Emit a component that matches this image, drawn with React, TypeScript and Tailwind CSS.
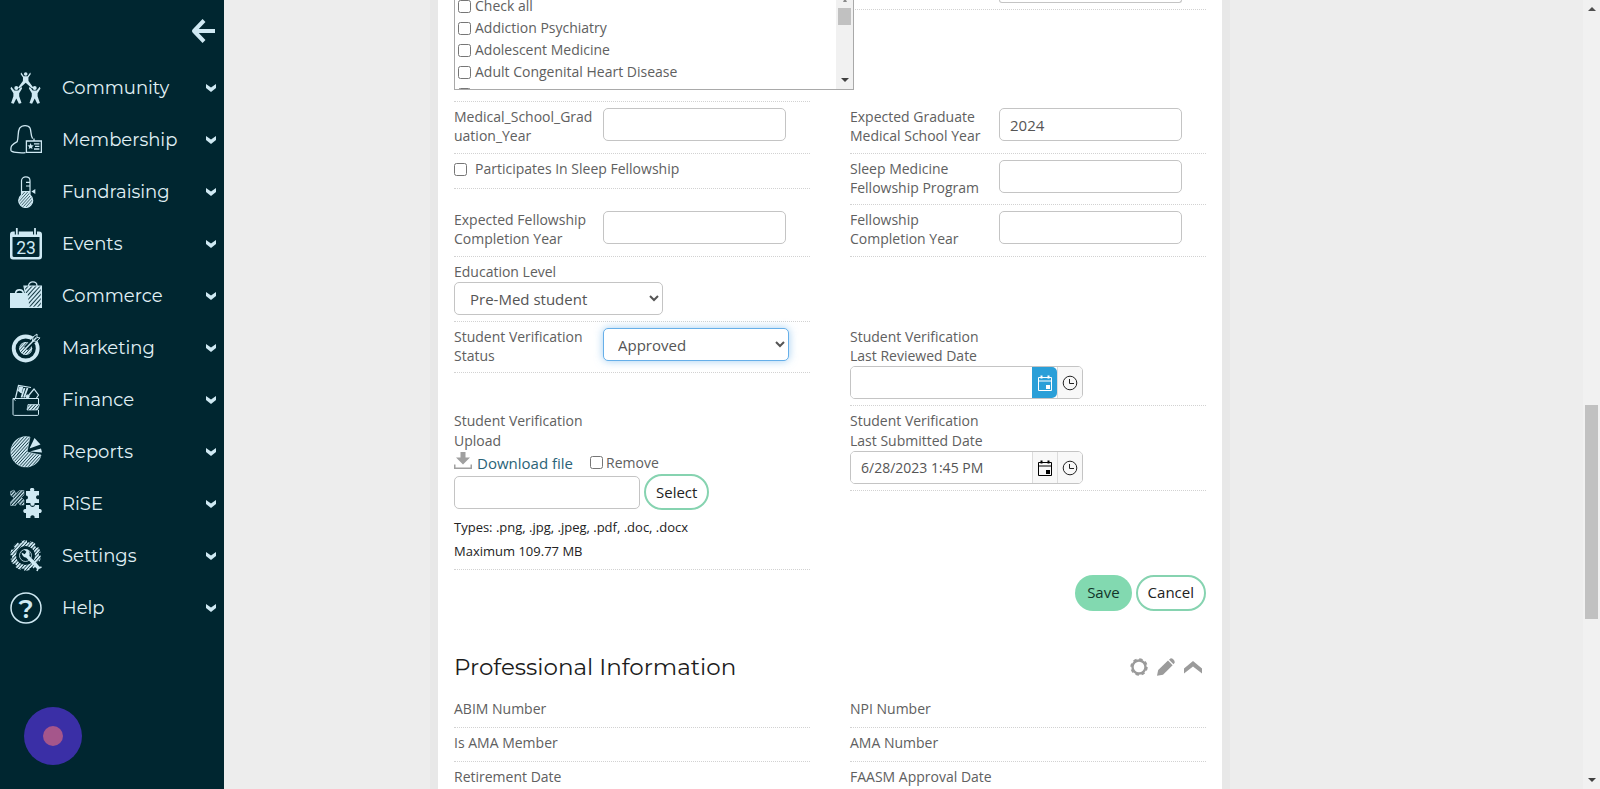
import React from "react";

type IconProps = { id: string };

function Hatch({ id, gap = 3 }: { id: string; gap?: number }) {
  return (
    <defs>
      <pattern id={id} width={gap} height={gap} patternUnits="userSpaceOnUse" patternTransform="rotate(42)">
        <rect width={gap / 2} height={gap} fill="currentColor" />
      </pattern>
    </defs>
  );
}

function Person({ x, y }: { x: number; y: number }) {
  return (
    <g transform={`translate(${x} ${y})`}>
      <circle cx="0" cy="1.6" r="2" fill="currentColor" />
      <path
        d="M-5 0.4L-5.8 2L-2.900 6.800L-2.900 9.800L-5.200 16.700L-2.600 17.400L0 12L2.600 17.400L5.200 16.700L2.900 9.800L2.900 6.800L5.800 2L5 0.400L2 4.200H-2Z"
        fill="currentColor"
      />
    </g>
  );
}

function CommunityIcon(_: IconProps) {
  return (
    <svg viewBox="0 0 32 32" className="size-8">
      <circle cx="15.7" cy="2" r="1.8" fill="currentColor" />
      <path
        d="M11.2 0.6L10.6 2L13 5.6L12.900 9L8 15.800L9.400 16.600L15.700 10.800L22 16.600L23.400 15.800L18.500 9L18.400 5.600L20.800 2L20.200 0.600L17.600 4.200H13.800Z"
        fill="currentColor"
      />
      <Person x={6.3} y={14.4} />
      <Person x={24.7} y={14.4} />
    </svg>
  );
}

function MembershipIcon(_: IconProps) {
  return (
    <svg viewBox="0 0 32 32" className="size-8" fill="none" stroke="currentColor" strokeWidth="1.3">
      <path d="M15.5 28.7C9 29.4 1.6 28 1 26.4C0.4 22.6 1.6 20.6 7.2 17.6C8.8 13 7.4 8 9.6 4.2C12 0.6 18.4 0.8 20 4C21.4 7 20.4 11 22.6 14.6" />
      <path d="M16.4 17H31.4V28.4H16.4Z" />
      <path d="M24 14.6V17M24 19.8H29.4M25 22.4H29.4M24 25H29.4" />
      <path d="M20.6 19l.9 2.2 2.2.2-1.700 1.500.5 2.200-1.900-1.200-1.900 1.200.5-2.200-1.700-1.500 2.200-.2z" fill="currentColor" stroke="none" />
    </svg>
  );
}

function FundraisingIcon({ id }: IconProps) {
  return (
    <svg viewBox="0 0 32 32" className="size-8" fill="none" stroke="currentColor" strokeWidth="1.2">
      <Hatch id={id} gap={2.2} />
      <path d="M11.500 15.500H20V19C21.800 20.400 22.700 22.200 22.700 24.500A7 7 0 0 1 8.700 24.500C8.700 22.200 9.800 20.400 11.500 19Z" fill={`url(#${id})`} stroke="none" />
      <path d="M11.500 4.700C11.500 -0.300 20 -0.300 20 4.700V19C21.800 20.400 22.700 22.200 22.700 24.500A7 7 0 0 1 8.700 24.500C8.700 22.200 9.800 20.400 11.500 19Z" />
      <path d="M16 6.300H20M16 10H20M11.500 15.500H20" />
      <path d="M21.400 15.400L25.300 13V18Z" fill="currentColor" stroke="none" />
    </svg>
  );
}

function EventsIcon(_: IconProps) {
  return (
    <svg viewBox="0 0 32 32" className="size-8">
      <path
        fillRule="evenodd"
        fill="currentColor"
        d="M3 3.500H29A3 3 0 0 1 32 6.500V28.500A3 3 0 0 1 29 31.500H3A3 3 0 0 1 0 28.500V6.500A3 3 0 0 1 3 3.500ZM2.500 9V27.500A1.600 1.600 0 0 0 4.100 29.100H27.900A1.600 1.600 0 0 0 29.500 27.500V9Z"
      />
      <path d="M6.800 0.500V6.500M25 0.500V6.500" stroke="#002630" strokeWidth="4" />
      <path d="M6.800 0.500V6.800M25 0.500V6.800" stroke="currentColor" strokeWidth="1.800" strokeLinecap="round" />
      <text x="16" y="25.500" textAnchor="middle" fontSize="17.500" fontFamily="Roboto, sans-serif" fontWeight="400" fill="currentColor">
        23
      </text>
    </svg>
  );
}

function CommerceIcon({ id }: IconProps) {
  return (
    <svg viewBox="0 0 32 32" className="size-8" fill="none" stroke="currentColor" strokeWidth="1.200">
      <Hatch id={id} gap={3} />
      <path d="M14 6H31.400V27.400H18Z" fill={`url(#${id})`} />
      <path d="M18.500 6C18.500 0.600 27 0.600 27 6" />
      <path d="M5.500 13.500C6 8.600 13 8.600 13.500 13.500" strokeWidth="1.600" />
      <path d="M0 13H17.500L19.500 28H0Z" fill="currentColor" stroke="none" />
    </svg>
  );
}

function MarketingIcon({ id }: IconProps) {
  return (
    <svg viewBox="0 0 32 32" className="size-8" fill="none" stroke="currentColor">
      <Hatch id={id} gap={2.2} />
      <circle cx="15.700" cy="16.500" r="12" strokeWidth="3.800" />
      <circle cx="15.700" cy="16.500" r="6.500" fill={`url(#${id})`} stroke="none" />
      <circle cx="15.700" cy="16.500" r="6" strokeWidth="0.700" />
      <path d="M16 16.500L28 4" stroke="#002630" strokeWidth="5" />
      <path d="M15.500 16.800L26.500 5.500" strokeWidth="1.500" />
      <path d="M22.500 9L23 5L27 2V5.500L30 5.900L26.600 9.300Z" strokeWidth="1" />
    </svg>
  );
}

function FinanceIcon({ id }: IconProps) {
  return (
    <svg viewBox="0 0 32 32" className="size-8" fill="none" stroke="currentColor" strokeWidth="1">
      <Hatch id={id} gap={2.400} />
      <path d="M28.500 20V14.500H3L5.500 16.500M3 14.500V30C3 31 3.500 31.400 4.500 31.400H27C28.200 31.400 28.500 31 28.500 30V26" />
      <path d="M18 20.500H29.500L27.500 26H17Z" fill={`url(#${id})`} strokeWidth="0.700" />
      <path d="M5.500 14L8.500 1.500L21 3.500" strokeWidth="1.200" />
      <path d="M9.500 3H12.500L11.500 9L8.500 7Z" fill="currentColor" />
      <path d="M14.500 4L11.500 13.500M17.500 4L14 13.500" strokeWidth="1.800" />
      <path d="M17 13.500L24 5L28.500 11L26.500 14" strokeWidth="1.200" />
      <circle cx="17.500" cy="12.500" r="1.600" fill="currentColor" />
    </svg>
  );
}

function ReportsIcon({ id }: IconProps) {
  return (
    <svg viewBox="0 0 32 32" className="size-8" fill="none" stroke="currentColor">
      <Hatch id={id} gap={2.3} />
      <path d="M17 16L20 1A15.300 15.300 0 1 0 31 19Z" fill={`url(#${id})`} strokeWidth="0.600" />
      <path d="M19.500 12.500L24.500 2L30.500 8.500Z" fill="currentColor" stroke="none" />
      <path d="M20 15.600L31 12.500L32 16.500Z" fill="currentColor" stroke="none" />
    </svg>
  );
}

function RiseIcon({ id }: IconProps) {
  return (
    <svg viewBox="0 0 32 32" className="size-8" fill="currentColor">
      <Hatch id={id} gap={2.5} />
      <path
        d="M0.500 3.500L4 2L6 5.500L9.500 2.500H14V7L11.500 9.500L14 12V17H10L8 14L5.500 17.500H0.500V14L4 10L0.500 7Z"
        fill={`url(#${id})`}
        stroke="currentColor"
        strokeWidth="0.400"
      />
      <path d="M16 3H20.500A2.100 2.100 0 1 1 23.800 3H29V7.500A2 2 0 1 0 29 11V15H24.500A2.100 2.100 0 1 1 20.500 15H16V11.500A2 2 0 1 0 16 7.500Z" />
      <path d="M16 17H20A2.600 2.600 0 0 0 25 17H29V21A2.100 2.100 0 1 1 29 25V30H24.500A2.100 2.100 0 1 0 20.500 30H16V25A2.100 2.100 0 1 1 16 21Z" />
    </svg>
  );
}

function SettingsIcon({ id }: IconProps) {
  return (
    <svg viewBox="0 0 32 32" className="size-8" fill="none" stroke="currentColor">
      <Hatch id={id} gap={2.5} />
      <circle cx="15.500" cy="15.500" r="11.500" stroke={`url(#${id})`} strokeWidth="4" />
      <circle cx="15.500" cy="15.500" r="14" stroke={`url(#${id})`} strokeWidth="2.600" strokeDasharray="5.500 3.300" />
      <circle cx="15.500" cy="15.500" r="6" strokeWidth="0.800" />
      <path d="M17 16L29 28.500" strokeWidth="3.400" />
      <path
        d="M11.500 12.500L14.800 14.200L16.400 11.800L14 9.500C18 8.600 20.500 12 19.500 15.500C17 18.800 12.500 18 11.500 12.500Z"
        fill="currentColor"
        stroke="none"
      />
      <path d="M27 31L28 28.500L31.500 27" strokeWidth="1.600" />
    </svg>
  );
}

function HelpIcon(_: IconProps) {
  return (
    <svg viewBox="0 0 32 32" className="size-8">
      <circle cx="16" cy="16" r="15" fill="none" stroke="currentColor" strokeWidth="1.500" />
      <text x="16" y="25.500" textAnchor="middle" fontSize="26" fontWeight="600" fontFamily="Montserrat, Inter, sans-serif" fill="currentColor">
        ?
      </text>
    </svg>
  );
}

const navItems: { label: string; Icon: (p: IconProps) => React.ReactElement }[] = [
  { label: "Community", Icon: CommunityIcon },
  { label: "Membership", Icon: MembershipIcon },
  { label: "Fundraising", Icon: FundraisingIcon },
  { label: "Events", Icon: EventsIcon },
  { label: "Commerce", Icon: CommerceIcon },
  { label: "Marketing", Icon: MarketingIcon },
  { label: "Finance", Icon: FinanceIcon },
  { label: "Reports", Icon: ReportsIcon },
  { label: "RiSE", Icon: RiseIcon },
  { label: "Settings", Icon: SettingsIcon },
  { label: "Help", Icon: HelpIcon },
];

function Sidebar() {
  return (
    <aside className="relative flex w-56 shrink-0 flex-col bg-[#002630] text-[#cfe9f3]">
      <div className="flex h-[62px] items-center justify-end pr-2">
        <button type="button" aria-label="Collapse menu">
          <svg viewBox="0 0 26 26" className="size-[26px]" fill="none" stroke="currentColor" strokeWidth="4">
            <path d="M3.500 13H25" />
            <path d="M14 2.500L4 13L14 23.500" strokeLinejoin="round" />
          </svg>
        </button>
      </div>
      <nav>
        {navItems.map(({ label, Icon }) => (
          <a key={label} href="#" className="flex h-[52px] items-center pr-2 pl-[10px]">
            <Icon id={`hatch-${label}`} />
            <span className="ml-5 flex-1 font-['Montserrat','Inter',sans-serif] text-lg text-[#e0f1f6]">{label}</span>
            <svg viewBox="0 0 10 8" className="h-2 w-[10px]" fill="currentColor">
              <path d="M0 0L5 3.400L10 0V4L5 8L0 4Z" />
            </svg>
          </a>
        ))}
      </nav>
      <button
        type="button"
        aria-label="Record"
        className="absolute bottom-6 left-6 flex size-[58px] items-center justify-center rounded-full bg-[#3a2fa6]"
      >
        <span className="size-5 rounded-full bg-[#a5568b]" />
      </button>
    </aside>
  );
}

const fieldBox = "h-[33px] rounded-[5px] border border-[#c4c4c4] bg-white text-[15px] text-[#555]";

function TextField({ id, label, value = "", tall = "min-h-[52px]" }: { id: string; label: string[]; value?: string; tall?: string }) {
  return (
    <div className={`flex items-start self-start border-b border-dotted border-[#d2d2d2] pt-[5px] ${tall}`}>
      <label htmlFor={id} className="w-[149px] shrink-0 leading-[19px]">
        {label.map((part) => (
          <span key={part} className="block whitespace-nowrap">
            {part}
          </span>
        ))}
      </label>
      <input id={id} type="text" defaultValue={value} className={`${fieldBox} mt-px w-[183px] px-[10px]`} />
    </div>
  );
}

function CalendarIcon() {
  return (
    <svg viewBox="0 0 16 16" className="size-4" fill="none" stroke="currentColor" strokeWidth="1">
      <path d="M1.500 2.500H14.500V15.500H1.500ZM1.500 6H14.500" />
      <path d="M4.500 0.500V3.500M11.500 0.500V3.500" strokeWidth="2" />
      <rect x="9" y="10" width="4" height="4" fill="currentColor" stroke="none" />
    </svg>
  );
}

function ClockIcon() {
  return (
    <svg viewBox="0 0 16 16" className="size-4" fill="none" stroke="currentColor" strokeWidth="1">
      <circle cx="8" cy="8" r="6.800" />
      <path d="M7.500 4V8.500H12" />
    </svg>
  );
}

function DateField({ id, lines, value = "", active = false, spacing, boxGap = "" }: { id: string; lines: string[]; value?: string; active?: boolean; spacing: string; boxGap?: string }) {
  return (
    <div className={`self-start border-b border-dotted border-[#d2d2d2] pt-[5px] pb-[6px] ${spacing}`}>
      <label htmlFor={id} className="block">
        {lines.map((l) => (
          <span key={l} className="block">
            {l}
          </span>
        ))}
      </label>
      <div className={`flex h-[33px] w-[233px] overflow-hidden rounded-[5px] border border-[#c4c4c4] ${boxGap}`}>
        <input id={id} type="text" defaultValue={value} className="min-w-0 flex-1 bg-white px-[10px] text-sm text-[#555]" />
        <button
          type="button"
          aria-label="Open calendar"
          className={
            active
              ? "flex w-[25px] items-center justify-center rounded-r-[5px] bg-[#2a9fd8] text-white"
              : "flex w-[25px] items-center justify-center border-l border-[#dcdcdc] bg-[#f8f8f8] text-black"
          }
        >
          <CalendarIcon />
        </button>
        <button
          type="button"
          aria-label="Open time list"
          className="flex w-[25px] items-center justify-center border-l border-[#dcdcdc] bg-[#f8f8f8] text-[#222]"
        >
          <ClockIcon />
        </button>
      </div>
    </div>
  );
}

const specialties = ["Check all", "Addiction Psychiatry", "Adolescent Medicine", "Adult Congenital Heart Disease"];

const professionalFields = ["ABIM Number", "NPI Number", "Is AMA Member", "AMA Number", "Retirement Date", "FAASM Approval Date"];

function SpecialtyList() {
  return (
    <div className="relative z-10 flex h-[90px] w-[400px] overflow-hidden border-x border-b border-[#a9a9a9] bg-white">
      <ul className="-mt-[5px] flex-1 pl-[3px]">
        {specialties.map((s) => (
          <li key={s} className="flex h-[22px] items-center gap-1">
            <input id={s} type="checkbox" className="size-[13px]" />
            <label htmlFor={s} className="leading-[22px]">{s}</label>
          </li>
        ))}
        <li className="flex h-[22px] items-center">
          <input type="checkbox" aria-label="Next specialty" className="size-[13px]" />
        </li>
      </ul>
      <div className="flex w-[17px] flex-col items-center bg-[#f1f1f1] pb-[7px]">
        <svg viewBox="0 0 8 4" className="mb-[6px] h-[2px] w-2" fill="#8a8a8a">
          <path d="M2 0H6L8 4H0Z" />
        </svg>
        <div className="h-[17px] w-[13px] bg-[#c1c1c1]" />
        <svg viewBox="0 0 8 4" className="mt-auto h-1 w-2" fill="#404040">
          <path d="M0 0H8L4 4Z" />
        </svg>
      </div>
    </div>
  );
}

export default function App() {
  return (
    <div className="flex h-screen overflow-hidden bg-[#ededed] font-['Open_Sans',sans-serif] text-sm text-[#606060]">
      <Sidebar />
      <main className="min-w-0 flex-1 overflow-hidden pr-[353px] pl-[206px]">
        <div className="min-h-full bg-[#e8e8e8] px-2">
          <form className="bg-white px-4" onSubmit={(e) => e.preventDefault()}>
            <div className="grid grid-cols-2 gap-x-10">
              <div className="flex h-[102px] flex-col border-b border-dotted border-[#d2d2d2]">
                <SpecialtyList />
              </div>
              <div className="h-[10px] border-b border-dotted border-[#d2d2d2]">
                <div className="ml-[149px] h-[3px] w-[183px] rounded-b-[5px] border-x border-b border-[#c4c4c4]" />
              </div>

              <TextField id="grad" label={["Medical_School_Grad", "uation_Year"]} />
              <TextField id="expgrad" label={["Expected Graduate", "Medical School Year"]} value="2024" />

              <div className="flex h-[35px] items-center self-start border-b border-dotted border-[#d2d2d2] pb-1">
                <input id="sleep" type="checkbox" className="size-[13px]" />
                <label htmlFor="sleep" className="ml-2">Participates In Sleep Fellowship</label>
              </div>
              <TextField id="program" label={["Sleep Medicine", "Fellowship Program"]} tall="min-h-[51px]" />

              <TextField id="expfellow" label={["Expected Fellowship", "Completion Year"]} />
              <TextField id="fellow" label={["Fellowship", "Completion Year"]} />

              <div className="border-b border-dotted border-[#d2d2d2] pt-[5px] pb-[6px]">
                <label htmlFor="education" className="block leading-[19px]">Education Level</label>
                <select id="education" className={`${fieldBox} mt-px block w-[209px] pl-[11px]`}>
                  <option>Pre-Med student</option>
                </select>
              </div>
              <div />

              <div className="flex min-h-[51px] items-start self-start border-b border-dotted border-[#d2d2d2] pt-[5px]">
                <label htmlFor="status" className="w-[149px] shrink-0 leading-[19px]">
                  <span className="block">Student Verification</span>
                  <span className="block">Status</span>
                </label>
                <select
                  id="status"
                  className="mt-px h-[33px] w-[186px] rounded-[5px] border border-[#66afe9] bg-white pl-[10px] text-[15px] text-[#555] shadow-[0_0_8px_rgba(102,175,233,0.6)]"
                >
                  <option>Approved</option>
                </select>
              </div>
              <DateField id="reviewed" lines={["Student Verification", "Last Reviewed Date"]} active spacing="leading-[19px]" boxGap="mt-px" />

              <div className="border-b border-dotted border-[#d2d2d2] pt-[5px] pb-[6px] leading-5">
                <label htmlFor="upload" className="block">
                  <span className="block">Student Verification</span>
                  <span className="block">Upload</span>
                </label>
                <div className="flex h-[23px] items-center">
                  <svg viewBox="0 0 18 18" className="mb-1 size-[18px]" fill="#a0a0a0">
                    <path d="M6.500 0H11.500V5.500H16L9 12.500L2 5.500H6.500Z" />
                    <path d="M0 12.500H1.500V15.500H16.500V12.500H18V17H0Z" />
                  </svg>
                  <a href="#" className="ml-[5px] text-[15px] text-[#2b6377]">Download file</a>
                  <input id="remove" type="checkbox" className="mr-[3px] ml-[17px] size-[13px]" />
                  <label htmlFor="remove">Remove</label>
                </div>
                <div className="flex h-9 items-center gap-1">
                  <input id="upload" type="text" className={`${fieldBox} w-[186px] px-[10px]`} />
                  <button type="button" className="h-9 rounded-full border-2 border-[#86d3b0] px-[10px] text-[15px] text-[#222]">
                    Select
                  </button>
                </div>
                <div className="mt-[5px] text-[13px] leading-6 text-[#222]">
                  <p>Types: .png, .jpg, .jpeg, .pdf, .doc, .docx</p>
                  <p>Maximum 109.77 MB</p>
                </div>
              </div>
              <DateField
                id="submitted"
                lines={["Student Verification", "Last Submitted Date"]}
                value="6/28/2023 1:45 PM"
                spacing="leading-5"
              />
            </div>

            <div className="mt-[5px] flex justify-end gap-1">
              <button type="submit" className="h-9 rounded-full bg-[#82d9b0] px-3 text-[15px] text-[#12352a]">Save</button>
              <button type="button" className="h-9 rounded-full border-2 border-[#86d3b0] px-[10px] text-[15px] text-[#222]">Cancel</button>
            </div>

            <div className="mt-[38px] flex h-9 items-center">
              <h2 className="flex-1 font-['Montserrat','Inter',sans-serif] text-[23px] text-[#1c1c1c]">Professional Information</h2>
              <div className="flex items-center gap-[9px] pr-1 text-[#9b9b9b]">
                <button type="button" aria-label="Options">
                  <svg viewBox="0 0 18 18" className="size-[18px]" fill="none" stroke="currentColor">
                    <circle cx="9" cy="9" r="6.500" strokeWidth="2.400" />
                    <circle cx="9" cy="9" r="7.800" strokeWidth="1.800" strokeDasharray="3.400 2.726" />
                  </svg>
                </button>
                <button type="button" aria-label="Edit">
                  <svg viewBox="0 0 18 18" className="size-[18px]" fill="currentColor">
                    <path d="M0 17.800L1.200 12L11 2.600L15.600 7.200L6 16.700Z" />
                    <path d="M12 1.700L13.500 0.400C15.500 0 18.400 3 17.600 4.800L16.500 6.300Z" />
                  </svg>
                </button>
                <button type="button" aria-label="Collapse section">
                  <svg viewBox="0 0 18 18" className="size-[18px]" fill="currentColor">
                    <path d="M9 3L18 10.500V15.500L9 8.500L0 15.500V10.500Z" />
                  </svg>
                </button>
              </div>
            </div>

            <dl className="mt-[9px] grid grid-cols-2 gap-x-10">
              {professionalFields.map((f) => (
                <div key={f} className="border-b border-dotted border-[#d2d2d2] pt-[5px] pb-[9px] leading-[19px]">
                  <dt>{f}</dt>
                </div>
              ))}
            </dl>
          </form>
        </div>
      </main>
      <div className="flex w-[17px] shrink-0 flex-col items-center justify-between bg-[#f1f1f1] py-[7px]">
        <svg viewBox="0 0 8 4" className="h-1 w-2" fill="#505050">
          <path d="M4 0L8 4H0Z" />
        </svg>
        <div className="flex w-full flex-1 flex-col items-center">
          <div className="grow-[394]" />
          <div className="w-[13px] grow-[214] bg-[#c1c1c1]" />
          <div className="grow-[159]" />
        </div>
        <svg viewBox="0 0 8 4" className="h-1 w-2" fill="#404040">
          <path d="M0 0H8L4 4Z" />
        </svg>
      </div>
    </div>
  );
}
